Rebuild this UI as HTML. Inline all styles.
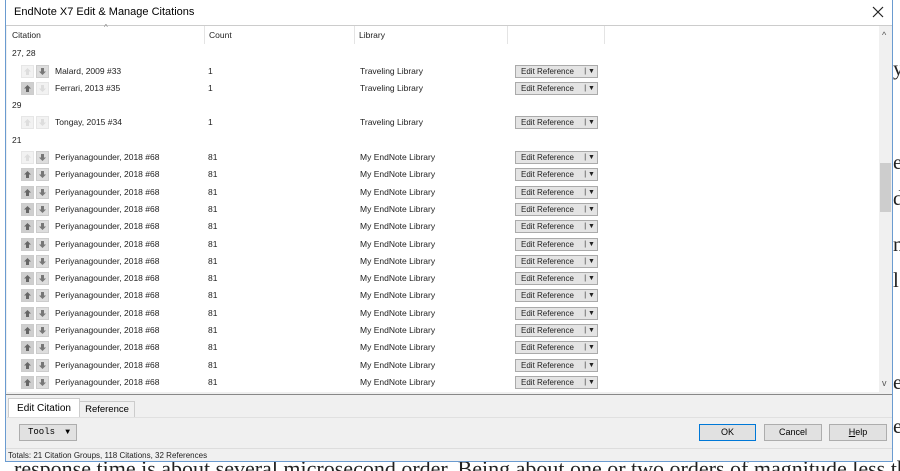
<!DOCTYPE html>
<html><head><style>
html,body{margin:0;width:900px;height:471px;overflow:hidden;background:#fff;}
body{position:relative;font-family:"Liberation Sans",sans-serif;}
.bg{position:absolute;font-family:"Liberation Serif",serif;font-size:21px;color:#222;}
.win{position:absolute;left:5px;top:0;width:888px;height:462px;border:1px solid #6a9bd0;border-top:none;background:#f0f0f0;box-sizing:border-box;overflow:hidden}
.title{position:absolute;left:0;top:0;width:100%;height:25px;background:#fff;border-bottom:1px solid #ccc;font-size:11px;line-height:25px;}
.title span{position:absolute;left:8px;}
.close{position:absolute;right:8px;top:6px;}
.list{position:absolute;left:1px;top:26px;width:872px;height:366px;background:#fff;font-size:8.5px;color:#222;}
.sb{position:absolute;left:873px;top:26px;width:13px;height:366px;background:#f0f0f0;}
.hdr{position:absolute;top:0;height:18px;line-height:18px;}
.r{position:absolute;height:17px;line-height:17px;white-space:nowrap;}
.ar{position:absolute;width:11px;height:11px;background:#ddd;border:1px solid #ccc;top:2px;}
.ar svg{position:absolute;left:1px;top:1px}
.ar.on{background:#cfcfcf}
.ar.off{background:#f2f2f2;border-color:#e6e6e6}
.eb{position:absolute;left:508px;top:2px;width:81px;height:11px;border:1px solid #aaa;background:#e4e4e4;font-size:8px;line-height:11px;}
.eb span{position:absolute;left:5px}
.eb i{position:absolute;right:2px;top:0;font-style:normal;font-size:7px}
.btn{position:absolute;height:15px;border:1px solid #adadad;background:#e1e1e1;font-size:9px;line-height:15px;text-align:center;}
</style></head><body>
<div class="bg" style="left:893px;top:56px">y</div>
<div class="bg" style="left:893px;top:150px">e</div>
<div class="bg" style="left:893px;top:186px">d</div>
<div class="bg" style="left:893px;top:232px">n</div>
<div class="bg" style="left:893px;top:268px">l</div>
<div class="bg" style="left:893px;top:370px">e</div>
<div class="bg" style="left:893px;top:414px">e</div>
<div class="bg" style="left:14px;top:456px;font-size:22px;white-space:nowrap;width:886px;overflow:hidden">response time is about several microsecond order. Being about one or two orders of magnitude less than</div>
<div class="win">
<div class="title"><span>EndNote X7 Edit &amp; Manage Citations</span><svg class="close" width="12" height="12"><path d="M1 1L11 11M11 1L1 11" stroke="#222" stroke-width="1.2"/></svg></div>
<div class="list">
<div class="hdr" style="left:5px">Citation</div>
<div style="position:absolute;left:97px;top:-3px;font-size:8px;color:#888">^</div>
<div class="hdr" style="left:202px">Count</div>
<div class="hdr" style="left:352px">Library</div>
<div style="position:absolute;left:197px;top:0;width:1px;height:18px;background:#e4e4e4"></div>
<div style="position:absolute;left:347px;top:0;width:1px;height:18px;background:#e4e4e4"></div>
<div style="position:absolute;left:500px;top:0;width:1px;height:18px;background:#e4e4e4"></div>
<div style="position:absolute;left:597px;top:0;width:1px;height:18px;background:#e4e4e4"></div>
<div id="rows"></div>
</div>
<div class="sb"><div style="position:absolute;left:3px;top:4px;font-size:9px;color:#555">^</div><div style="position:absolute;left:1px;top:137px;width:11px;height:49px;background:#cdcdcd"></div><div style="position:absolute;left:3px;top:352px;font-size:9px;color:#555">v</div></div>
<div style="position:absolute;left:0;top:394px;width:886px;height:1px;background:#888"></div>
<div style="position:absolute;left:2px;top:398px;width:70px;height:19px;background:#fff;border:1px solid #ccc;border-bottom:none;font-size:10px;line-height:19px;text-align:center">Edit Citation</div>
<div style="position:absolute;left:73px;top:401px;width:54px;height:16px;background:#f0f0f0;border:1px solid #ccc;border-bottom:none;font-size:9.5px;line-height:16px;text-align:center">Reference</div>
<div style="position:absolute;left:1px;top:417px;width:885px;height:1px;background:#e0e0e0"></div>
<div class="btn" style="left:13px;top:424px;width:56px;text-align:left;font-family:'Liberation Mono',monospace;font-size:9px"><span style="margin-left:8px">Tools</span><span style="position:absolute;right:6px;font-size:8px">▼</span></div>
<div class="btn" style="left:693px;top:424px;width:55px;border:1px solid #0078d7">OK</div>
<div class="btn" style="left:758px;top:424px;width:56px">Cancel</div>
<div class="btn" style="left:823px;top:424px;width:56px"><u>H</u>elp</div>
<div style="position:absolute;left:0;top:448px;width:886px;height:1px;background:#ddd"></div>
<div style="position:absolute;left:2px;top:451px;font-size:8px;color:#222">Totals: 21 Citation Groups, 118 Citations, 32 References</div>
</div>
<script>
var rows=[["g",53,"27, 28"],["r",71,"Malard, 2009 #33","1","Traveling Library",0],["r",88,"Ferrari, 2013 #35","1","Traveling Library",1],["g",105,"29"],["r",122,"Tongay, 2015 #34","1","Traveling Library",2],["g",140,"21"]];
for(var i=0;i<14;i++)rows.push(["r",157+i*17.3,"Periyanagounder, 2018 #68","81","My EndNote Library",i==0?3:4]);
function up(c){return '<svg width="9" height="9"><path d="M4.5 1L1 4.5H3V8H6V4.5H8Z" fill="'+c+'"/></svg>';}
function dn(c){return '<svg width="9" height="9"><path d="M4.5 8L1 4.5H3V1H6V4.5H8Z" fill="'+c+'"/></svg>';}
var h="";
rows.forEach(function(r){var t=r[1]-26-8;
if(r[0]=="g"){h+='<div class="r" style="left:5px;top:'+t+'px">'+r[2]+'</div>';return;}
var s=r[5];var uo=(s==0||s==2||s==3);var dO=(s==1||s==2);
h+='<div class="r" style="left:0;top:'+t+'px;width:860px"><div class="ar '+(uo?"off":"on")+'" style="left:14px">'+up(uo?"#ddd":"#666")+'</div><div class="ar '+(dO?"off":"")+'" style="left:29px">'+dn(dO?"#ddd":"#777")+'</div><span style="position:absolute;left:48px">'+r[2]+'</span><span style="position:absolute;left:201px">'+r[3]+'</span><span style="position:absolute;left:353px">'+r[4]+'</span><div class="eb"><span>Edit Reference</span><i>| ▼</i></div></div>';});
document.getElementById("rows").innerHTML=h;
</script>
</body></html>
